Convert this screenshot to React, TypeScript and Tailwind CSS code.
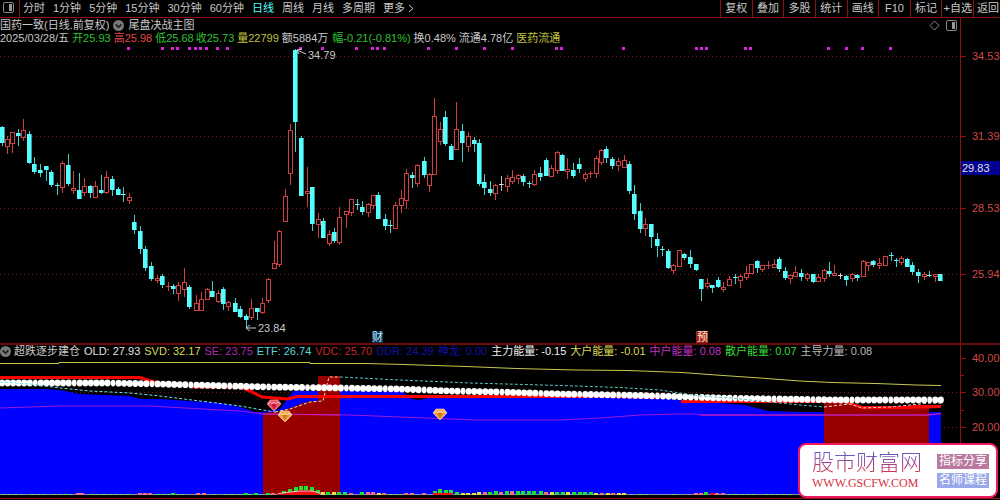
import { useId } from "react"

type Kind = "u" | "d" | "w"

// x, high, body top, body bottom, low, kind
type Candle = [number, number, number, number, number, Kind]

type Bar = [number, number, string]

const periods = ["分时", "1分钟", "5分钟", "15分钟", "30分钟", "60分钟", "日线", "周线", "月线", "多周期", "更多"]

const tools = ["复权", "叠加", "多股", "统计", "画线", "F10", "标记", "+自选"]

const quote = [
  { text: "2025/03/28/五", color: "text-[#c8c8c8]", gap: "mr-[3px]" },
  { text: "开25.93", color: "text-[#30c030]", gap: "mr-[3px]" },
  { text: "高25.98", color: "text-[#e04848]", gap: "mr-[3px]" },
  { text: "低25.68", color: "text-[#30c030]", gap: "mr-[2px]" },
  { text: "收25.73", color: "text-[#30c030]", gap: "mr-[3px]" },
  { text: "量22799", color: "text-[#c0c040]", gap: "mr-[3px]" },
  { text: "额5884万", color: "text-[#c8c8c8]", gap: "mr-[4px]" },
  { text: "幅-0.21(-0.81%)", color: "text-[#30c030]", gap: "mr-[3px]" },
  { text: "换0.48%", color: "text-[#c8c8c8]", gap: "mr-[3px]" },
  { text: "流通4.78亿", color: "text-[#c8c8c8]", gap: "mr-[3px]" },
  { text: "医药流通", color: "text-[#c0c040]", gap: "" },
]

const indicators = [
  { text: "OLD: 27.93", color: "text-[#e0e0e0]" },
  { text: "SVD: 32.17", color: "text-[#d8d858]" },
  { text: "SE: 23.75", color: "text-[#b028b0]" },
  { text: "ETF: 26.74", color: "text-[#58d8d8]" },
  { text: "VDC: 25.70", color: "text-[#c02828]" },
  { text: "DDR: 24.39", color: "text-[#1010a8]" },
  { text: "神龙: 0.00", color: "text-[#1010a8]" },
  { text: "主力能量: -0.15", color: "text-[#f0f0f0]" },
  { text: "大户能量: -0.01", color: "text-[#d8d858]" },
  { text: "中户能量: 0.08", color: "text-[#c030c0]" },
  { text: "散户能量: 0.07", color: "text-[#38d838]" },
  { text: "主导力量: 0.08", color: "text-[#b8b8b8]" },
]

const candles: Candle[] = [
  [2, 126, 127, 142, 145, "d"], [7, 136, 139, 146, 153, "u"], [12, 132, 132, 143, 152, "u"], [18, 129, 133, 135, 145, "d"],
  [23, 119, 130, 137, 140, "u"], [29, 131, 134, 162, 163, "d"], [34, 157, 164, 171, 173, "d"], [40, 164, 170, 172, 176, "d"],
  [46, 166, 166, 169, 180, "d"], [51, 170, 172, 184, 186, "d"], [57, 183, 185, 186, 194, "d"], [62, 161, 163, 187, 192, "u"],
  [68, 154, 165, 183, 185, "d"], [73, 171, 188, 190, 193, "u"], [79, 173, 190, 198, 198, "d"], [84, 178, 186, 192, 195, "u"],
  [90, 185, 186, 192, 197, "d"], [95, 181, 186, 197, 197, "u"], [101, 175, 190, 192, 193, "d"], [106, 171, 177, 192, 193, "u"],
  [112, 176, 179, 189, 195, "d"], [118, 187, 189, 194, 194, "d"], [123, 187, 194, 195, 201, "d"], [129, 193, 197, 200, 203, "u"],
  [134, 215, 222, 229, 233, "d"], [140, 226, 231, 248, 253, "d"], [145, 246, 249, 267, 270, "d"], [151, 262, 266, 278, 280, "d"],
  [157, 275, 278, 280, 282, "u"], [162, 274, 276, 284, 287, "d"], [168, 282, 286, 286, 290, "u"], [173, 284, 286, 288, 293, "d"],
  [178, 282, 285, 293, 300, "u"], [184, 268, 282, 289, 296, "u"], [189, 285, 287, 306, 308, "d"], [196, 295, 303, 310, 310, "u"],
  [201, 292, 299, 310, 310, "u"], [207, 288, 289, 299, 299, "u"], [212, 281, 291, 296, 296, "d"], [218, 290, 293, 301, 302, "u"],
  [223, 287, 289, 303, 309, "d"], [228, 301, 302, 306, 310, "u"], [235, 298, 303, 311, 311, "d"], [240, 306, 309, 316, 317, "d"],
  [246, 314, 316, 319, 327, "d"], [251, 299, 308, 317, 319, "u"], [257, 308, 308, 311, 319, "d"], [262, 298, 303, 312, 313, "u"],
  [268, 278, 279, 300, 302, "u"], [274, 241, 263, 268, 268, "u"], [279, 230, 231, 264, 266, "u"], [285, 189, 196, 221, 221, "u"],
  [290, 124, 130, 173, 184, "u"], [295, 49, 50, 121, 151, "d"], [301, 136, 138, 195, 195, "d"], [307, 167, 191, 193, 206, "u"],
  [312, 187, 187, 223, 230, "d"], [318, 213, 219, 224, 237, "u"], [323, 218, 221, 237, 237, "d"], [329, 230, 234, 243, 245, "u"],
  [334, 228, 232, 240, 242, "d"], [339, 207, 217, 242, 244, "u"], [346, 211, 211, 214, 227, "u"], [351, 199, 199, 212, 215, "u"],
  [357, 199, 204, 205, 209, "d"], [362, 201, 207, 211, 214, "d"], [368, 203, 204, 212, 216, "u"], [373, 195, 195, 205, 208, "u"],
  [378, 192, 195, 218, 218, "d"], [385, 214, 219, 225, 229, "d"], [390, 220, 225, 226, 232, "d"], [395, 202, 205, 228, 228, "u"],
  [401, 190, 198, 205, 212, "u"], [406, 169, 173, 200, 208, "u"], [412, 172, 175, 177, 187, "d"], [417, 164, 165, 183, 186, "u"],
  [424, 157, 161, 174, 177, "d"], [429, 173, 174, 185, 191, "u"], [434, 98, 116, 174, 174, "u"], [440, 122, 129, 141, 144, "u"],
  [445, 111, 117, 143, 145, "d"], [451, 144, 146, 159, 159, "d"], [456, 102, 129, 149, 149, "u"], [462, 124, 131, 142, 161, "d"],
  [468, 132, 136, 146, 151, "u"], [474, 137, 140, 143, 151, "d"], [479, 139, 143, 183, 185, "d"], [484, 174, 182, 187, 194, "d"],
  [490, 181, 189, 192, 195, "d"], [495, 184, 185, 193, 199, "u"], [501, 176, 184, 185, 190, "w"], [507, 175, 178, 186, 191, "u"],
  [512, 170, 177, 181, 183, "u"], [518, 174, 175, 178, 183, "u"], [523, 174, 176, 181, 185, "d"], [529, 181, 183, 184, 187, "d"],
  [534, 170, 174, 184, 185, "u"], [540, 167, 173, 176, 180, "d"], [546, 158, 160, 175, 175, "d"], [551, 165, 168, 176, 176, "u"],
  [557, 151, 152, 170, 173, "u"], [562, 154, 155, 170, 170, "d"], [567, 158, 169, 171, 178, "u"], [573, 163, 170, 175, 177, "d"],
  [579, 158, 164, 168, 172, "d"], [585, 172, 174, 178, 181, "u"], [590, 171, 173, 174, 177, "u"], [596, 156, 158, 173, 177, "u"],
  [601, 149, 150, 162, 164, "u"], [606, 146, 149, 157, 162, "d"], [612, 157, 159, 165, 168, "d"], [618, 158, 161, 165, 170, "u"],
  [624, 155, 160, 167, 167, "u"], [629, 161, 164, 190, 193, "d"], [634, 185, 194, 213, 219, "d"], [640, 203, 211, 228, 232, "d"],
  [645, 218, 224, 228, 235, "u"], [651, 224, 224, 236, 247, "d"], [657, 233, 239, 245, 256, "d"], [662, 246, 249, 250, 255, "d"],
  [668, 249, 251, 267, 268, "d"], [673, 264, 265, 270, 273, "u"], [679, 250, 250, 266, 266, "u"], [684, 253, 254, 257, 259, "d"],
  [690, 250, 257, 263, 267, "d"], [696, 264, 264, 269, 270, "d"], [701, 279, 279, 288, 300, "d"], [707, 278, 283, 286, 288, "u"],
  [712, 285, 285, 287, 292, "d"], [718, 277, 280, 286, 287, "d"], [723, 282, 287, 289, 291, "u"], [729, 276, 279, 285, 285, "u"],
  [735, 274, 277, 278, 283, "d"], [740, 274, 276, 280, 287, "u"], [746, 266, 273, 277, 279, "u"], [751, 264, 264, 273, 273, "u"],
  [757, 260, 261, 267, 272, "d"], [762, 265, 265, 269, 271, "u"], [768, 261, 265, 266, 268, "u"], [774, 259, 264, 267, 267, "u"],
  [779, 257, 259, 268, 271, "d"], [785, 267, 271, 277, 279, "d"], [790, 274, 275, 278, 283, "u"], [795, 266, 272, 276, 276, "u"],
  [801, 269, 273, 276, 280, "d"], [807, 273, 274, 278, 280, "u"], [813, 274, 274, 281, 282, "d"], [818, 274, 277, 281, 281, "u"],
  [824, 269, 270, 278, 281, "u"], [829, 262, 271, 273, 276, "d"], [834, 265, 273, 275, 275, "u"], [840, 273, 275, 276, 278, "w"],
  [846, 275, 276, 279, 285, "d"], [852, 273, 274, 278, 281, "u"], [857, 274, 275, 277, 280, "d"], [863, 260, 261, 276, 276, "u"],
  [868, 262, 262, 265, 270, "u"], [873, 260, 261, 264, 266, "d"], [879, 258, 263, 265, 268, "u"], [885, 256, 256, 265, 265, "u"],
  [891, 252, 255, 256, 260, "d"], [896, 258, 260, 261, 266, "d"], [901, 256, 258, 262, 264, "u"], [907, 258, 259, 266, 266, "d"],
  [912, 262, 265, 271, 274, "d"], [918, 269, 272, 275, 282, "d"], [924, 272, 274, 276, 279, "u"], [929, 271, 275, 276, 276, "d"],
  [935, 274, 274, 276, 281, "u"], [940, 274, 274, 280, 280, "d"],
]

const signals = [
  128, 162, 172, 177, 189, 195, 200, 206, 217, 227, 300, 322, 356, 372, 377, 384, 428, 456, 484, 512, 556, 561, 623,
  696, 701, 706, 745, 750, 828, 846, 862, 890,
]

const beadLevels: [number, number][] = [
  [0, 383], [60, 383], [110, 383], [160, 384], [230, 386], [270, 387], [340, 388], [400, 389], [450, 391], [500, 392],
  [560, 394], [620, 395], [660, 396], [720, 398], [780, 399], [840, 400], [945, 400],
]

const G = "#20e030"
const R = "#f01010"
const P = "#f07080"
const Y = "#e0e040"

const bars: Bar[] = [
  [78, 2, P], [82, 2, P], [140, 2, P], [145, 2, P], [150, 2, P], [173, 2, G], [198, 2, P], [204, 2, P], [246, 2, G],
  [256, 2, G], [268, 2, G], [273, 2, P], [279, 2, R], [284, 4, G], [290, 6, G], [296, 8, G], [301, 9, G], [306, 9, G],
  [312, 8, G], [318, 5, G], [323, 3, Y], [328, 3, G], [334, 3, Y], [339, 3, G], [345, 3, G], [351, 2, P], [362, 3, G],
  [368, 3, P], [373, 3, P], [379, 2, Y], [384, 2, P], [406, 2, P], [412, 2, P], [424, 2, P], [435, 4, G], [440, 6, G],
  [446, 5, G], [451, 5, G], [457, 3, G], [463, 2, Y], [468, 2, Y], [474, 2, Y], [479, 3, Y], [485, 3, P], [490, 3, G],
  [496, 4, G], [501, 3, P], [507, 4, G], [512, 4, P], [518, 4, G], [523, 4, G], [529, 4, G], [534, 4, G], [541, 4, G],
  [546, 3, P], [552, 3, Y], [557, 3, G], [563, 3, G], [568, 3, Y], [574, 3, G], [580, 3, G], [585, 3, G], [591, 3, G],
  [596, 2, Y], [602, 2, P], [608, 2, Y], [613, 2, P], [619, 2, Y], [624, 2, Y], [696, 2, P], [701, 2, P], [706, 3, G],
  [712, 2, R], [717, 2, P], [723, 2, P],
]

const greens: [number, number][] = [
  [2, 22], [30, 46], [52, 72], [90, 132], [156, 170], [176, 184], [212, 218], [224, 262], [388, 402], [638, 650],
  [672, 678], [728, 758], [764, 792], [800, 830], [850, 880], [900, 930],
]

function beadY(x: number) {
  const i = Math.max(1, beadLevels.findIndex(([bx]) => bx >= x))
  const [x0, y0] = beadLevels[i - 1]
  const [x1, y1] = beadLevels[i]
  return y0 + ((x - x0) / (x1 - x0)) * (y1 - y0)
}

function CandleMark({ c }: { c: Candle }) {
  const [x, high, top, bottom, low, kind] = c
  const h = Math.max(1, bottom - top)
  if (kind === "u") {
    return (
      <g stroke="#d04040" fill="none">
        <path d={`M${x + 0.5} ${high}V${top}M${x + 0.5} ${bottom}V${low + 1}`} />
        {h > 1 ? <rect x={x - 1.5} y={top + 0.5} width="4" height={h} /> : <path d={`M${x - 2} ${top + 0.5}h5`} />}
      </g>
    )
  }
  const color = kind === "w" ? "#e8e8e8" : "#55ffff"
  return (
    <g fill={color}>
      <rect x={x} y={high} width="1" height={low - high + 1} opacity="0.8" />
      <rect x={x - 2} y={top} width="4.6" height={h + (h > 1 ? 1 : 0)} />
    </g>
  )
}

function Gem({ x, y, tone }: { x: number; y: number; tone: "red" | "gold" }) {
  const [dark, mid, light] = tone === "red" ? ["#d01838", "#f05068", "#ffc0c8"] : ["#d87818", "#f0a850", "#ffe8c0"]
  return (
    <g transform={`translate(${x} ${y})`}>
      <path d="M-4 -5H4L7 -1L0 6L-7 -1Z" fill={mid} stroke={light} strokeWidth="0.6" />
      <path d="M-3 -1H3L0 5Z" fill={dark} />
      <path d="M-6 -1L-4 -3L-2 -1L0 -3L2 -1L4 -3L6 -1" fill="none" stroke={light} strokeWidth="0.8" />
    </g>
  )
}

function ChevronDot() {
  return (
    <svg className="h-[11px] w-[11px] shrink-0" viewBox="0 0 11 11" aria-hidden="true">
      <circle cx="5.5" cy="5.5" r="5.5" fill="#787878" />
      <path d="M2.7 4.4L5.5 7.2L8.3 4.4" fill="none" stroke="#181818" strokeWidth="1.5" />
    </svg>
  )
}

function PanelIcon() {
  return (
    <svg className="h-[11px] w-[11px]" viewBox="0 0 11 11" aria-hidden="true">
      <rect x="0.5" y="0.5" width="10" height="10" rx="1.5" fill="none" stroke="#888" />
      <rect x="6" y="2" width="3" height="7" fill="#999" />
    </svg>
  )
}

function Toolbar() {
  return (
    <header className="flex h-[18px] items-center justify-between overflow-hidden border-b border-[#901010] text-[#c8c8c8]">
      <nav className="flex h-full items-center whitespace-nowrap">
        <button type="button" aria-label="面板" className="flex h-full w-5 items-center justify-start border-r border-[#901010] pb-[3px] pl-[3px]">
          <PanelIcon />
        </button>
        <div className="flex gap-2 pl-[3px]">
          {periods.map((p) => (
            <button type="button" key={p} className={p === "日线" ? "text-[#55ffff]" : ""}>
              {p}
              {p === "更多" && (
                <svg className="ml-[3px] inline h-[9px] w-[6px] align-[-1px]" viewBox="0 0 6 9" aria-hidden="true">
                  <path d="M1 1L5 4.5L1 8" fill="none" stroke="#c8c8c8" />
                </svg>
              )}
            </button>
          ))}
        </div>
      </nav>
      <div className="flex h-full w-[280px] shrink-0 whitespace-nowrap">
        <div className="grid w-[253px] grid-cols-8">
          {tools.map((t) => (
            <button type="button" key={t} className="flex items-center justify-center border-l border-[#901010]">
              {t}
            </button>
          ))}
        </div>
        <button type="button" className="flex-1 border-l border-[#901010] pl-[3px] text-left">返回</button>
      </div>
    </header>
  )
}

function PriceChart() {
  return (
    <svg className="block h-[299px] w-full" viewBox="0 44 960 299" preserveAspectRatio="none" role="img" aria-label="日线">
      <g stroke="#701818" strokeDasharray="1 3">
        {[56.5, 136.5, 208.5, 274.5].map((y) => (
          <path key={y} d={`M0 ${y}H960`} />
        ))}
      </g>
      {signals.map((x) => (
        <rect key={x} x={x - 1} y="47" width="3" height="3" fill="#e020e0" />
      ))}
      {candles.map((c) => (
        <CandleMark key={c[0]} c={c} />
      ))}
      <g fill="none" stroke="#c8c8c8">
        <path d="M297 50L306 54M297 50L302 49M297 50L299 54" />
        <path d="M246 328H256M246 328L250 325M246 328L250 331" />
      </g>
      <g fill="#c8c8c8" fontSize="11">
        <text x="308" y="59">34.79</text>
        <text x="258" y="332">23.84</text>
      </g>
      <rect x="372" y="331" width="11" height="12" fill="#083058" />
      <text x="372" y="341" fontSize="11" fill="#c8f0f8">财</text>
      <rect x="696" y="331" width="12" height="12" fill="#a02020" />
      <text x="697" y="341" fontSize="11" fill="#ffe8c8">预</text>
    </svg>
  )
}

function PriceAxis() {
  const marks: [string, number][] = [["34.53", 56], ["31.39", 136], ["28.53", 208], ["25.94", 274]]
  return (
    <svg className="block h-[325px] w-full" viewBox="961 18 39 325">
      {marks.map(([label, y]) => (
        <g key={label}>
          <path d={`M961 ${y + 0.5}h5`} stroke="#901010" />
          <text x="972" y={y + 4} fontSize="11" fill="#d04848">{label}</text>
        </g>
      ))}
      <rect x="961" y="161" width="39" height="14" fill="#000090" />
      <text x="962" y="172" fontSize="11" fill="#e0e0e0">29.83</text>
    </svg>
  )
}

function IndicatorChart() {
  const beads = Array.from({ length: 170 }, (_, i) => 2 + i * 5.555)
  return (
    <svg className="block h-[140px] w-full" viewBox="0 358 960 140" preserveAspectRatio="none" role="img" aria-label="超跌逐步建仓">
      <g stroke="#701818" strokeDasharray="1 3">
        <path d="M0 392.5H960M0 427.5H960" />
      </g>
      <path
        d="M0 389H45L60 390L80 394L130 396L140 399L160 399L220 403L240 407L255 412H263L280 409L293 391H402L412 399L420 400L431 397H590L660 398L682 400L745 405L768 411L800 412H941V495H0Z"
        fill="#0000ff"
      />
      <path d="M263 413L280 411L290 408L303 403L312 401H318V376H340V495H263Z" fill="#980000" />
      <path d="M824 403H850L865 408H905L912 406H929V495H824Z" fill="#980000" />
      <path d="M929 405H941V411H929Z" fill="#000" />
      <path
        d="M0 363.5H59V362.5H310V363.5H366L404 364.5L466 366.5L516 368.5L576 370L627 370.5L682 372.5L716 375L760 378L800 381L832 382.5L876 383.5L916 385L941 385.5"
        fill="none"
        stroke="#c8c850"
      />
      <path
        d="M0 408L30 407L60 406H150L185 408L240 411L263 414L350 415L425 418L476 420H560L600 418L640 415L676 414H696L700 415H928L941 413.5"
        fill="none"
        stroke="#a018d8"
      />
      <path d="M263 414L340 415M700 415H928L941 413.5" fill="none" stroke="#d020b0" />
      <g fill="none" stroke="#ff0000">
        <path d="M0 377.5H140L157 383" strokeWidth="3" />
        <path d="M192 387.5H242" strokeWidth="2" />
        <path d="M240 387L250 391L262 397L288 399L297 396.5H590" strokeWidth="3" />
        <path d="M590 396.5L660 398" strokeWidth="2" />
        <path d="M681 401.5H845L862 407.5H905L912 406.5H941" strokeWidth="3" />
        <path d="M905 408L941 407" strokeWidth="2" />
      </g>
      {beads.map((x, i) => (
        <ellipse key={i} cx={x} cy={beadY(x)} rx={i % 7 === 6 ? 2.4 : 3.1} ry="3.4" fill="#fff" />
      ))}
      <path
        d="M0 382L30 384L60 388L90 391L130 393L160 396L200 401L240 406L263 410L275 412"
        fill="none" stroke="#70e8e0" strokeDasharray="3 2"
      />
      <path d="M275 412L290 409L310 402L323 401L329 377H340" fill="none" stroke="#e0e0c8" strokeDasharray="3 2" />
      <path
        d="M340 377L400 380L470 383L560 385.5L620 387.5L660 390L680 393L700 396L730 398L770 402L800 405L824 407"
        fill="none" stroke="#58c8c0" strokeDasharray="3 2"
      />
      <path d="M824 407L850 404L862 408L890 407L930 403H941" fill="none" stroke="#e8d8d0" strokeDasharray="3 2" />
      <path d="M0 494.5H941" stroke="#8090b8" />
      <path d={greens.map(([a, b]) => `M${a} 494.5H${b}`).join("")} stroke="#60e060" strokeDasharray="4 2" />
      {bars.map(([x, h, color]) => (
        <rect key={x} x={x - 2} y={495 - h} width="4" height={Math.min(h, 4)} fill={color} />
      ))}
      <path d="M278 495L290 492L300 491L312 491L320 494V495Z" fill={R} />
      <path d="M278 493.5L290 492L300 491L312 491L322 493.5" fill="none" stroke="#f0c0c0" />
      <path d="M433 494H453" stroke={R} strokeWidth="2" />
      <Gem x={274} y={405} tone="red" />
      <Gem x={285} y={416} tone="gold" />
      <Gem x={440} y={414} tone="gold" />
    </svg>
  )
}

function IndicatorAxis() {
  const marks: [string, number][] = [["40.00", 358], ["30.00", 392], ["20.00", 427]]
  return (
    <svg className="block h-[153px] w-full" viewBox="961 345 39 153">
      <path d="M961 375.5h3M961 410.5h3" stroke="#901010" />
      {marks.map(([label, y]) => (
        <g key={label}>
          <path d={`M961 ${y + 0.5}h5`} stroke="#901010" />
          <text x="972" y={y + 4} fontSize="11" fill="#d04848">{label}</text>
        </g>
      ))}
    </svg>
  )
}

function SiteBadge() {
  return (
    <aside className="absolute right-[2px] bottom-[2px] flex h-[55px] w-[200px] items-center justify-between rounded-lg border-2 border-[#f01860] bg-white pr-[7px] pl-3">
      <div className="flex flex-col whitespace-nowrap">
        <strong className="bg-linear-to-b from-[#5060d0] via-[#a04090] to-[#e02030] bg-clip-text text-[22px] leading-[24px] font-light text-transparent">
          股市财富网
        </strong>
        <a href="#" className="font-['Liberation_Serif',serif] text-xs leading-[16px] text-[#d83040]">WWW.GSCFW.COM</a>
      </div>
      <div className="flex flex-col gap-1 text-xs leading-[15px] text-white">
        <span className="bg-[#b878a0] px-[2px]">指标分享</span>
        <span className="bg-[#98a8e8] px-[2px]">名师课程</span>
      </div>
    </aside>
  )
}

export default function App() {
  const titleId = useId()

  return (
    <div className="relative min-h-screen overflow-hidden bg-black font-['Liberation_Sans','Noto_Sans_CJK_SC',sans-serif] text-[11px] leading-[13px]">
      <Toolbar />
      <section aria-labelledby={titleId} className="flex">
        <div className="min-w-0 flex-1">
          <div className="flex h-[14px] items-center justify-between pr-[3px] text-[#c8c8c8]">
            <h1 id={titleId} className="flex items-center gap-1 whitespace-nowrap">
              国药一致(日线.前复权)
              <ChevronDot />
              <span>尾盘决战主图</span>
            </h1>
            <div className="flex items-center gap-[6px]">
              <svg className="h-[11px] w-[11px]" viewBox="0 0 11 11" aria-hidden="true">
                <path d="M5.5 1L10 5.5L5.5 10L1 5.5Z" fill="none" stroke="#888" />
              </svg>
              <PanelIcon />
            </div>
          </div>
          <div className="flex h-3 items-center whitespace-nowrap">
            {quote.map((q) => (
              <span key={q.text} className={`${q.color} ${q.gap}`}>{q.text}</span>
            ))}
          </div>
          <PriceChart />
        </div>
        <div className="w-10 shrink-0 border-l border-[#901010]">
          <PriceAxis />
        </div>
      </section>
      <section className="flex border-t-2 border-b border-t-[#680c0c] border-b-[#901010]">
        <div className="min-w-0 flex-1">
          <div className="flex h-[13px] items-center gap-1 whitespace-nowrap">
            <div className="flex items-center gap-[3px] text-[#c8c8c8]">
              <ChevronDot />
              <h2>超跌逐步建仓</h2>
            </div>
            {indicators.map((it) => (
              <span key={it.text} className={it.color}>{it.text}</span>
            ))}
          </div>
          <IndicatorChart />
        </div>
        <div className="w-10 shrink-0 border-l border-[#901010]">
          <IndicatorAxis />
        </div>
      </section>
      <SiteBadge />
    </div>
  )
}
